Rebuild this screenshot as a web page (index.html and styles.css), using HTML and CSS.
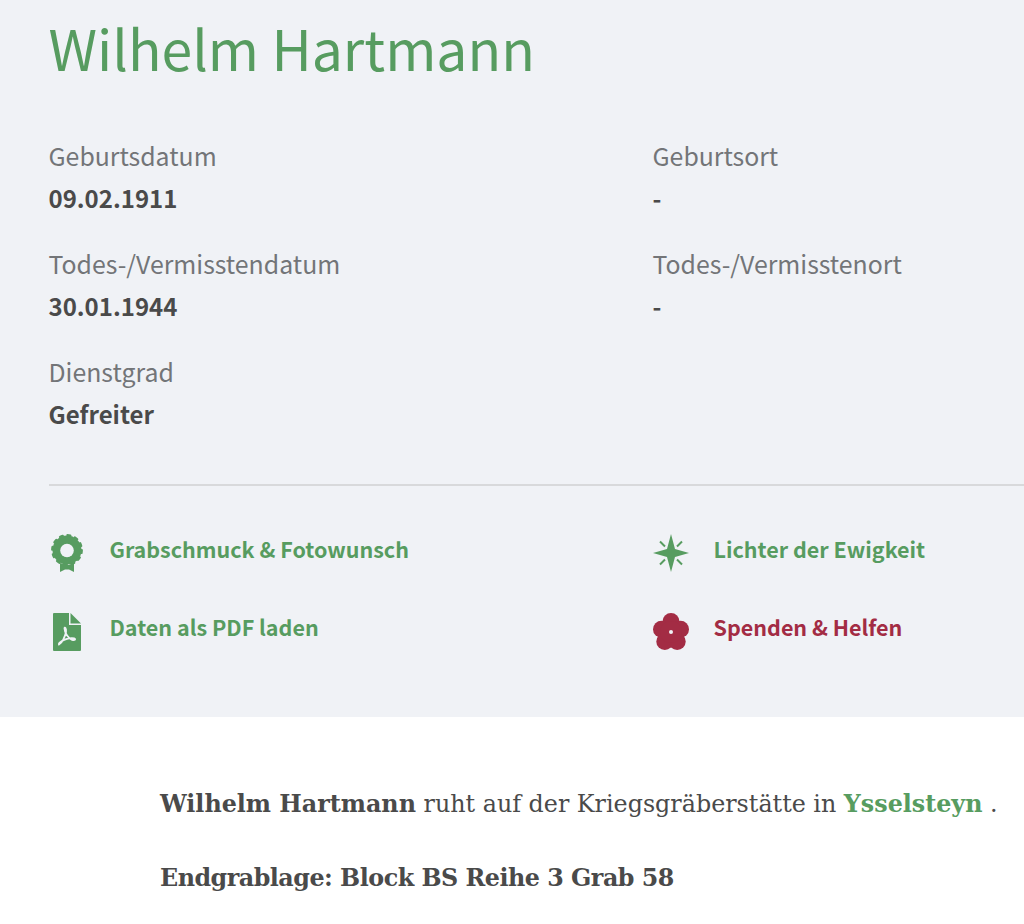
FILE: index.html
```html
<!DOCTYPE html>
<html lang="de">
<head>
<meta charset="utf-8">
<title>Wilhelm Hartmann</title>
<link rel="stylesheet" href="styles.css">
</head>
<body>
<section class="panel">
  <h1 class="name">Wilhelm Hartmann</h1>
  <dl class="facts">
    <div class="fact"><dt>Geburtsdatum</dt><dd>09.02.1911</dd></div>
    <div class="fact"><dt>Geburtsort</dt><dd>-</dd></div>
    <div class="fact"><dt>Todes-/Vermisstendatum</dt><dd>30.01.1944</dd></div>
    <div class="fact"><dt>Todes-/Vermisstenort</dt><dd>-</dd></div>
    <div class="fact"><dt>Dienstgrad</dt><dd>Gefreiter</dd></div>
  </dl>
  <hr class="rule">
  <div class="links">
    <a class="link" href="#">
      <svg class="icon" viewBox="0 0 36 38" aria-hidden="true"><circle cx="18" cy="16" r="14.500"/><circle class="scallop" cx="18" cy="16" r="14.800"/><circle class="eye" cx="18" cy="16.500" r="6.800"/><path d="M11 29l5.500 2h3L25 29v9l-5-2.500h-4L11 38z"/></svg>
      <span>Grabschmuck &amp; Fotowunsch</span>
    </a>
    <a class="link link-low" href="#">
      <svg class="icon" viewBox="0 0 36 38" aria-hidden="true"><path d="M21.500 0L32 10.500H21.500z"/><path d="M5 0h15v12h12v25a1 1 0 0 1-1 1H5a1 1 0 0 1-1-1V1a1 1 0 0 1 1-1z"/><path class="cut" d="M10 31.500C13 30 16 24 17 19c.5-4-1.500-5.500-1.500-3.500 0 4.500 4.500 10.500 7.500 11.300 2 .4 3.500.2 3-.8-.5-1-5-1-8-.2-3 .9-9 3.700-8 5.700z"/></svg>
      <span>Daten als PDF laden</span>
    </a>
  </div>
  <div class="links">
    <a class="link" href="#">
      <svg class="icon" viewBox="0 0 36 38" aria-hidden="true"><path d="M18 0l4 15 14 4-14 4-4 15-4-15L0 19l14-4z"/><path class="spark" d="M7 7.500l5 5M29 7.500l-5 5M7 30.500l5-5M29 30.500l-5-5"/></svg>
      <span>Lichter der Ewigkeit</span>
    </a>
    <a class="link link-red link-low" href="#">
      <svg class="icon" viewBox="0 0 36 38" aria-hidden="true"><circle cx="18" cy="8.500" r="8.500"/><circle cx="8.500" cy="16.200" r="8.500"/><circle cx="27.500" cy="16.200" r="8.500"/><circle cx="11.800" cy="28.500" r="8.500"/><circle cx="24.200" cy="28.500" r="8.500"/><circle cx="18" cy="19" r="11"/><circle class="eye" cx="18" cy="19" r="2"/></svg>
      <span>Spenden &amp; Helfen</span>
    </a>
  </div>
</section>
<section class="story">
  <p><strong>Wilhelm Hartmann</strong> ruht auf der Kriegsgräberstätte in <a class="place" href="#">Ysselsteyn</a> .</p>
  <p class="grave"><strong>Endgrablage: Block BS Reihe 3 Grab 58</strong></p>
</section>
</body>
</html>
```
FILE: styles.css
```css
* { box-sizing: border-box; }
html, body { margin: 0; padding: 0; background: #fff; overflow-x: hidden; }
body { font-family: "Noto Sans CJK SC", "Noto Sans", sans-serif; color: #4a4a4a; }
.panel { background: #f0f2f6; height: 717px; padding: 0 0 0 48.5px; overflow: hidden; display: grid; grid-template-columns: 604px 1fr; align-content: start; }
.name { grid-column: 1 / -1; margin: -3px 0 0; padding-top: 12px; height: 85px; font-size: 55.3px; line-height: 76px; font-weight: 400; color: #579c60; }
.facts { grid-column: 1 / -1; margin: 54px 0 0; display: grid; grid-template-columns: 604px 1fr; grid-auto-rows: 108px; }
.fact { margin: 0; }
dt { font-size: 24.85px; line-height: 39px; color: #737578; }
dd { margin: 3px 0 0; font-size: 24px; line-height: 40px; font-weight: 700; color: #4a4a4a; }
.rule { grid-column: 1 / -1; margin: 24px 0 0; border: 0; height: 2px; background: #d8d9db; }
.links { margin-top: 28px; display: grid; grid-auto-rows: 78px; }
.link { display: flex; align-items: center; gap: 25px; height: 78px; font-size: 21.5px; font-weight: 700; color: #579c60; text-decoration: none; fill: #579c60; }
.link span { padding-bottom: 10px; }
.link-low .icon { margin-top: 2px; }
.link-red { color: #a32c44; fill: #a32c44; }
.icon { width: 36px; height: 38px; flex: none; }
.cut { fill: none; stroke: #f0f2f6; stroke-width: 1.800; }
.spark { fill: none; stroke: #579c60; stroke-width: 2; }
.scallop { fill: none; stroke: #579c60; stroke-width: 2.200; stroke-linecap: round; stroke-dasharray: 3 4.750; }
.eye { fill: #f0f2f6; }
.story { padding: 69px 0 0 160px; font-family: "DejaVu Serif", serif; font-size: 23.8px; line-height: 36px; color: #4a4a4a; }
.story p { margin: 0 0 38px; }
.story .grave { letter-spacing: -0.5px; }
.place { color: #579c60; font-weight: 700; text-decoration: none; }
```
